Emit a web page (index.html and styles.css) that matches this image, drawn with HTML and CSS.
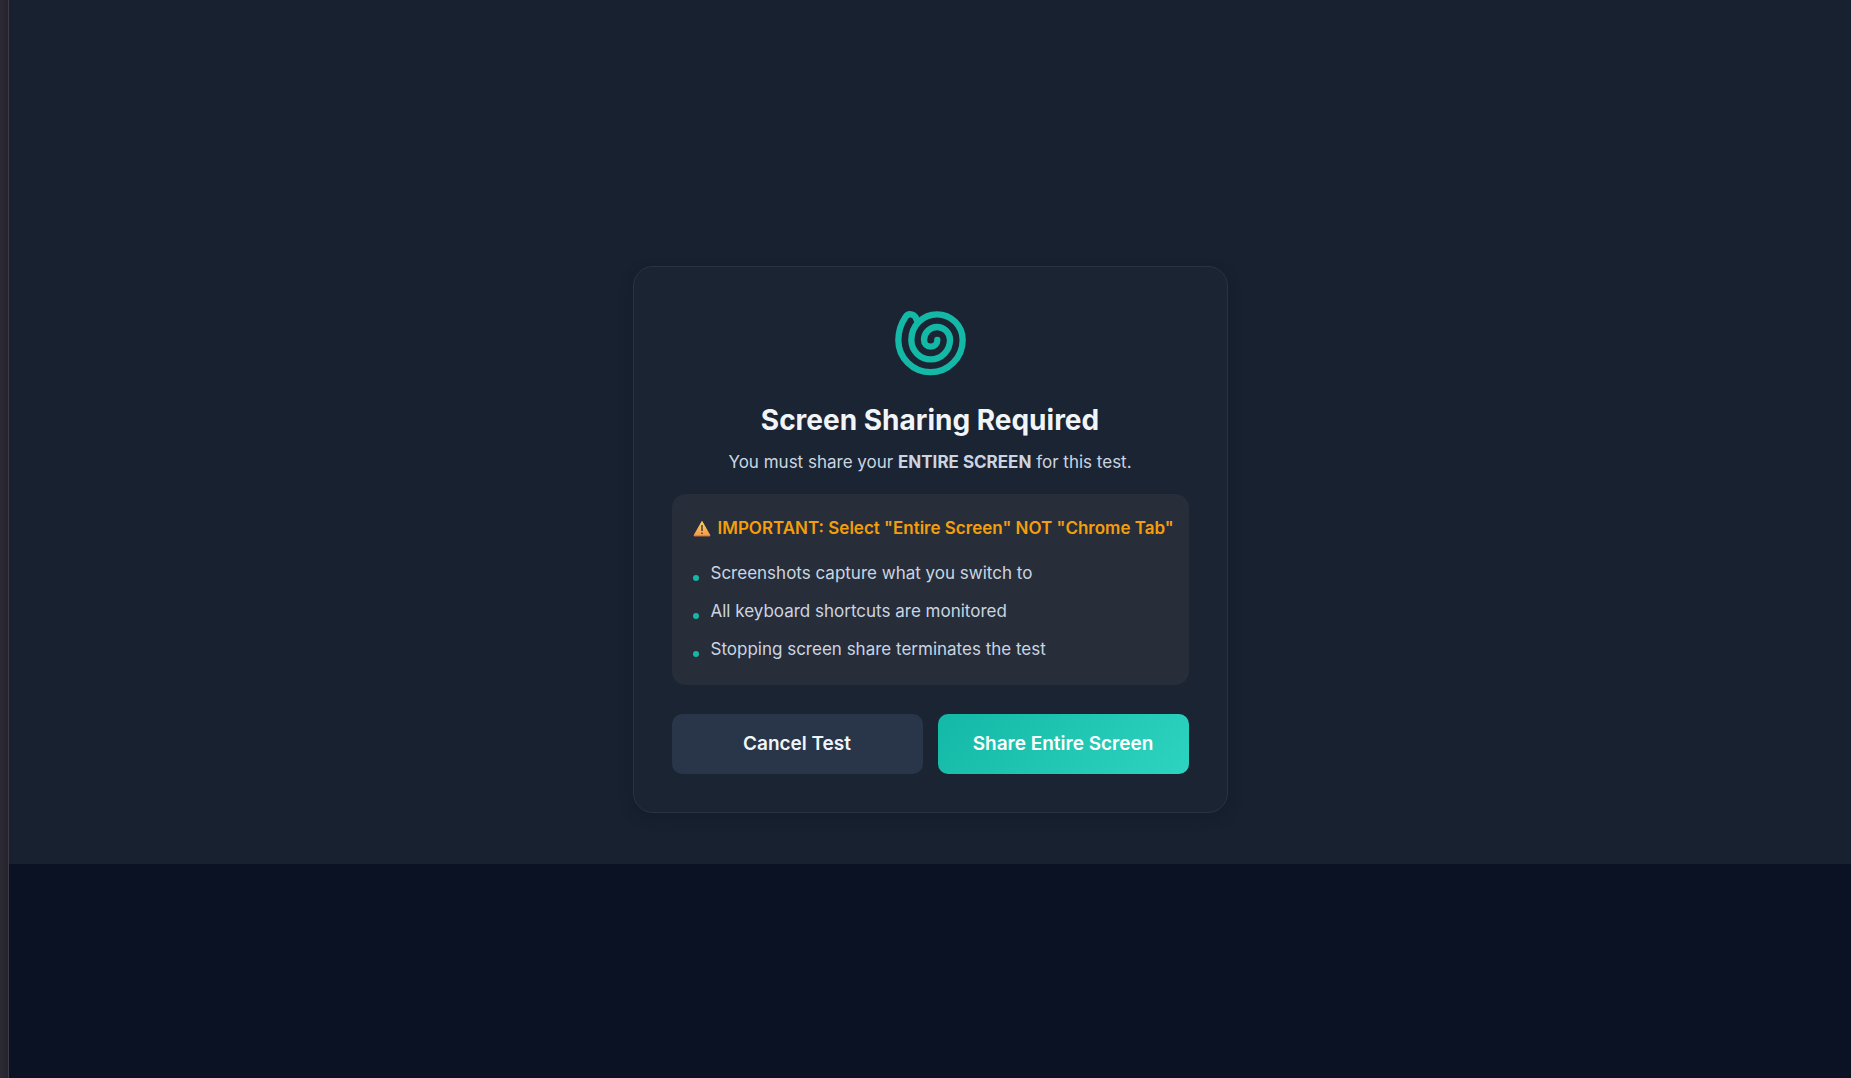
FILE: index.html
```html
<!doctype html>

<html lang="en">
<head>
  <meta charset="utf-8">
  <title>Screen Sharing Required</title>
  <meta name="viewport" content="width=device-width, initial-scale=1" />
  <link rel="stylesheet" href="styles.css">
</head>

<body>
  <div class="edge"></div>

  <main class="backdrop">
    <section class="card" role="dialog" aria-labelledby="title">
      <svg class="logo" viewBox="36 32 231 231" aria-hidden="true">
        <path d="M172 137A20 20 0 0 1 132 137A39 39 0 0 1 210 137A58 58 0 0 1 94 137A77 77 0 0 1 248 137A96 96 0 0 1 55 137C55 108 64 86 77 67C86 54 106 60 110 76L111 80"/>
      </svg>

      <h1 id="title">Screen Sharing Required</h1>
      <p class="lead">You must share your <strong>ENTIRE SCREEN</strong> for this test.</p>

      <div class="notice">
        <h2>
          <svg class="warning" viewBox="0 0 18 18" aria-hidden="true">
            <defs>
              <linearGradient id="amber" x1="0" y1="0" x2="0" y2="1">
                <stop offset="0" stop-color="#ffd15c"/>
                <stop offset="1" stop-color="#f59a4c"/>
              </linearGradient>
            </defs>
            <path d="M9 2.5L17 16.5H1Z" fill="url(#amber)" stroke="url(#amber)" stroke-linejoin="round"/>
            <path d="M1 17H17" stroke="#b9703f"/>
            <path d="M9 6V12M9 13.5V15" stroke="#4a3a37" stroke-width="1.5"/>
          </svg>
          IMPORTANT: Select "Entire Screen" NOT "Chrome Tab"
        </h2>
        <ul>
          <li>Screenshots capture what you switch to</li>
          <li>All keyboard shortcuts are monitored</li>
          <li>Stopping screen share terminates the test</li>
        </ul>
      </div>

      <div class="actions">
        <button type="button" class="cancel">Cancel Test</button>
        <button type="button" class="share">Share Entire Screen</button>
      </div>
    </section>
  </main>
</body>
</html>
```
FILE: styles.css
```css
* {
  box-sizing: border-box;
}

body {
  margin: 0;
  display: flex;
  min-height: 100vh;
  background: #0a1224;
  color: #cbd5e1;
  font-family: Inter, "Liberation Sans", sans-serif;
  font-size: 17px;
}

h1, h2, p, ul {
  margin: 0;
  padding: 0;
}

.edge {
  width: 9px;
  background: linear-gradient(to right, #2c2a33, #25242e);
  border-right: 1px solid #3e3b45;
}

.backdrop {
  flex: 1;
  display: flex;
  align-items: center;
  justify-content: center;
  background: linear-gradient(#182130 864px, #0a1224 864px);
}

.card {
  width: 595px;
  max-width: 100%;
  padding: 38px;
  background: #1b2432;
  border: 1px solid #283444;
  border-radius: 20px;
  box-shadow: 0 5px 14px rgba(15, 20, 40, 0.3);
  text-align: center;
}

.logo {
  display: block;
  width: 77px;
  height: 77px;
  margin: 0 auto 20px;
  fill: none;
  stroke: #14b8a6;
  stroke-width: 19;
  stroke-linecap: round;
  stroke-linejoin: round;
}

h1 {
  margin-bottom: 11px;
  color: #f1f5f9;
  font-size: 28px;
  font-weight: 700;
  line-height: 36px;
}

.lead {
  margin-bottom: 19px;
  line-height: 26px;
}

.notice {
  margin-bottom: 29px;
  padding: 20px 19px 22px;
  background: #272e3a;
  border-radius: 14px;
  text-align: left;
}

.notice h2 {
  display: flex;
  align-items: center;
  gap: 7px;
  padding-left: 2px;
  margin-bottom: 17px;
  color: #f59e0b;
  font-size: 17px;
  font-weight: 600;
  line-height: 28px;
  white-space: nowrap;
}

.warning {
  flex: none;
  width: 18px;
  height: 18px;
  fill: none;
}

.notice ul {
  display: grid;
  gap: 10px;
  list-style: none;
}

.notice li {
  display: flex;
  align-items: center;
  gap: 12px;
  padding-left: 2px;
  line-height: 28px;
}

.notice li::before {
  content: "";
  width: 6px;
  height: 6px;
  margin-top: 10px;
  background: #14b8a6;
  border-radius: 50%;
}

.actions {
  display: grid;
  grid-template-columns: 1fr 1fr;
  gap: 15px;
}

button {
  height: 60px;
  padding: 0;
  border: none;
  border-radius: 10px;
  color: #f1f5f9;
  font: 600 19px Inter, "Liberation Sans", sans-serif;
  cursor: pointer;
}

.cancel {
  background: #293548;
}

.share {
  background: linear-gradient(135deg, #14b8a6, #2dd4bf);
  color: white;
}
```
